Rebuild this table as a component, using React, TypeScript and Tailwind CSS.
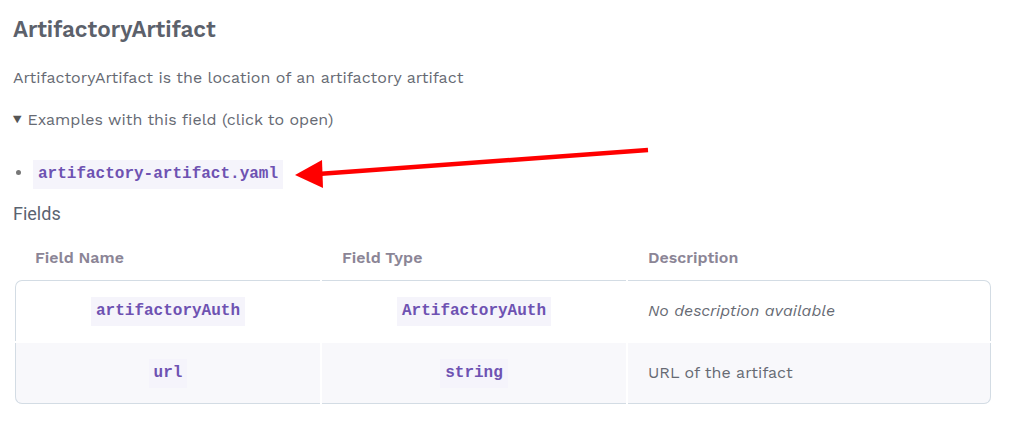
import { JSX } from "react"

const sans = "font-['Work_Sans','Open_Sans','Liberation_Sans',sans-serif]"
const mono = "font-['Liberation_Mono',monospace]"

function Code({ children }: { children: string }): JSX.Element {
    return (
        <code className={`${mono} font-bold text-[16px] text-[#6e52b2] bg-[#f5f4fb] px-[5px] py-[5px] leading-[19px] inline-block`}>
            {children}
        </code>
    )
}

interface Row {
    name: string
    type: string
    desc: string
    italic?: boolean
}

const rows: Row[] = [
    { name: "artifactoryAuth", type: "ArtifactoryAuth", desc: "No description available", italic: true },
    { name: "url", type: "string", desc: "URL of the artifact" },
]

export default function App() {
    return (
        <div className={`${sans} w-[1022px] h-[426px] bg-white px-[13px] pt-[14px] text-[#666a73] relative overflow-hidden`}>
            <h2 className="text-[22.5px] font-semibold text-[#5c616b] leading-[30px]">ArtifactoryArtifact</h2>
            <p className="text-[16px] mt-[24px] leading-[20px]">
                ArtifactoryArtifact is the location of an artifactory artifact
            </p>
            <div className="text-[16px] mt-[22px] leading-[20px] flex items-center">
                <span className="text-[11px] mr-[6px] text-[#555]">▼</span>
                Examples with this field (click to open)
            </div>

            {/* example list */}
            <ul className="mt-[30px] pl-[20px] list-disc marker:text-[#777]">
                <li>
                    <Code>artifactory-artifact.yaml</Code>
                </li>
            </ul>

            {/* red arrow annotation */}
            <svg className="absolute left-0 top-0 pointer-events-none" width="1022" height="426">
                <line x1="648" y1="150" x2="318" y2="174" stroke="#ff0000" strokeWidth="4.5" />
                <polygon points="295,175 322,160 323,188" fill="#ff0000" />
            </svg>

            <h3 className="font-['Roboto',sans-serif] text-[18px] text-[#5a6370] mt-[13px] leading-[24px]">Fields</h3>

            <table className="mt-[10px] w-[980px] border-separate border-spacing-[2px] text-[16px]">
                <thead>
                    <tr className="text-left text-[#8b8596]">
                        <th className="w-[305px] pl-[20px] py-[8px] font-semibold">Field Name</th>
                        <th className="w-[304px] pl-[20px] py-[8px] font-semibold">Field Type</th>
                        <th className="pl-[20px] py-[8px] font-semibold">Description</th>
                    </tr>
                </thead>
                <tbody>
                    {rows.map((r, i) => {
                        const first = i === 0
                        const last = i === rows.length - 1
                        const bg = i % 2 === 1 ? "bg-[#f8f8fb]" : "bg-white"
                        const edge = `${first ? "border-t" : ""} ${last ? "border-b" : ""} border-[#d3dce4]`
                        return (
                            <tr key={r.name} className={bg}>
                                <td className={`h-[61px] text-center ${edge} border-l ${first ? "rounded-tl-[7px]" : ""} ${last ? "rounded-bl-[7px]" : ""}`}>
                                    <Code>{r.name}</Code>
                                </td>
                                <td className={`text-center ${edge}`}>
                                    <Code>{r.type}</Code>
                                </td>
                                <td className={`pl-[20px] ${edge} border-r ${first ? "rounded-tr-[7px]" : ""} ${last ? "rounded-br-[7px]" : ""} ${r.italic ? "italic" : ""}`}>
                                    {r.desc}
                                </td>
                            </tr>
                        )
                    })}
                </tbody>
            </table>
        </div>
    )
}
